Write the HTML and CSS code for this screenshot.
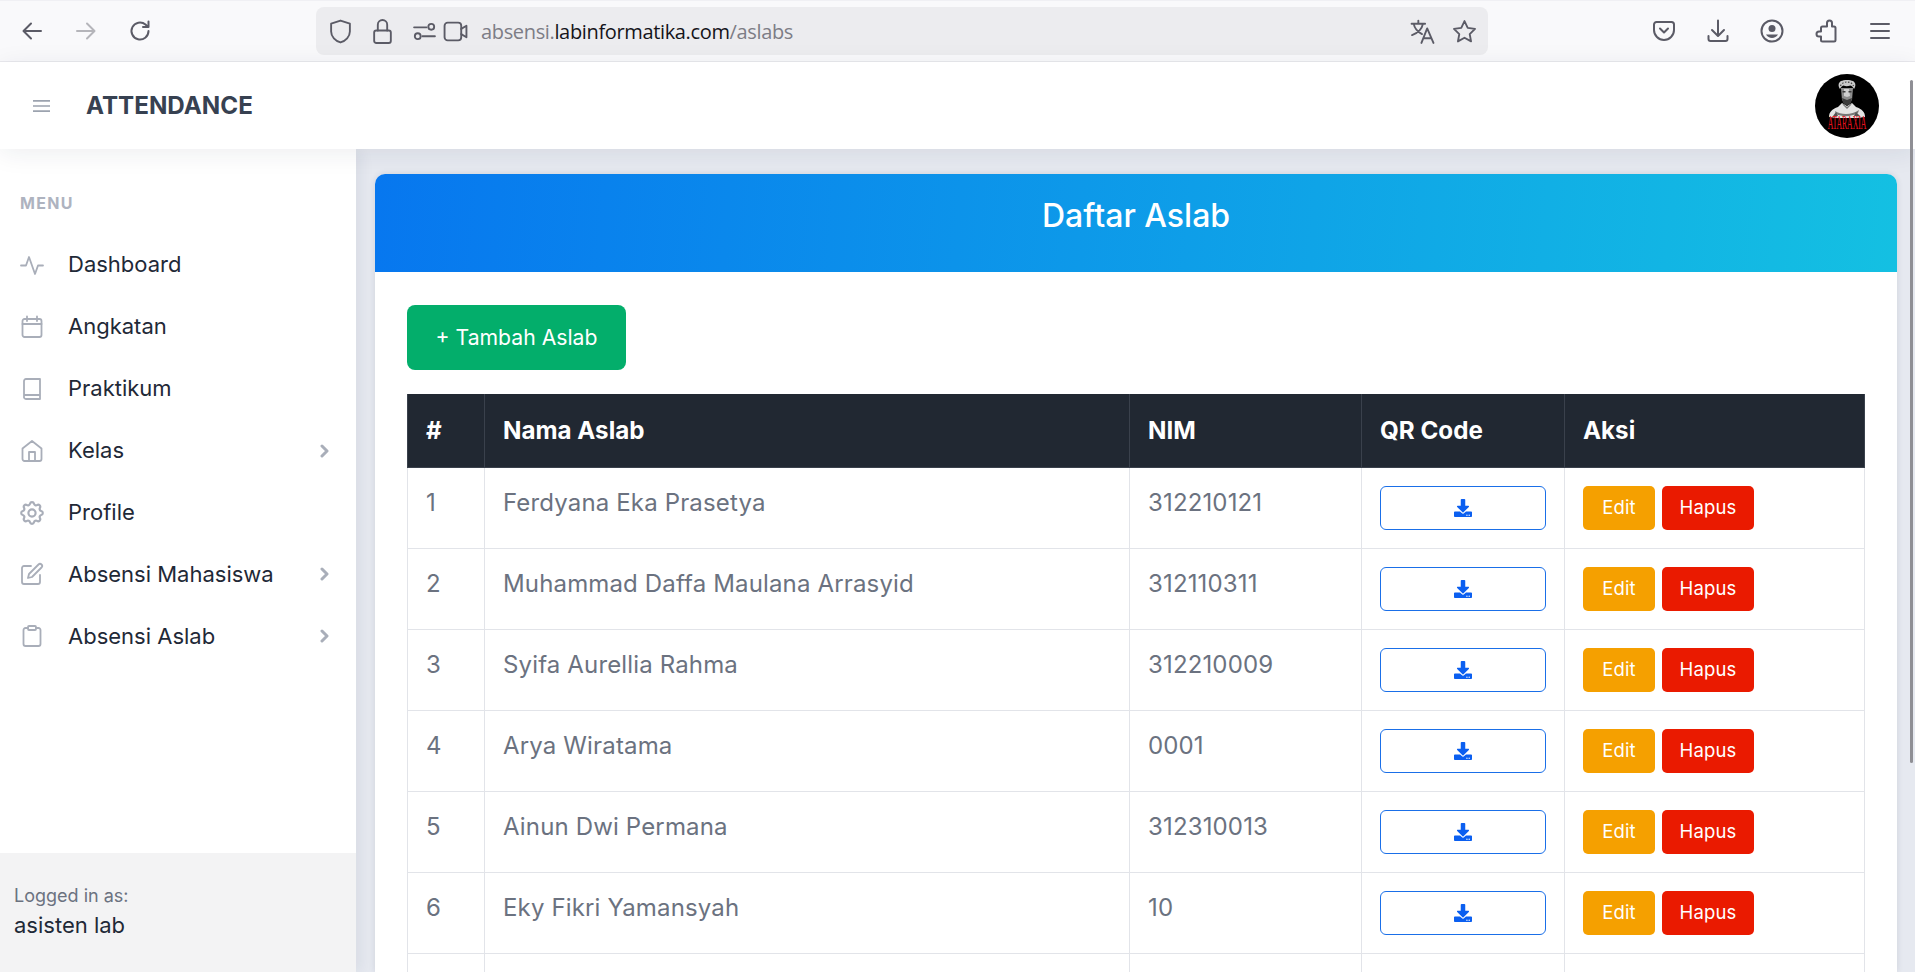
FILE: index.html
```html
<!DOCTYPE html>
<html lang="id">
<head>
<meta charset="utf-8">
<title>Daftar Aslab</title>
<link rel="stylesheet" href="styles.css">
</head>
<body>
<div class="window">
  <div class="toolbar">
    <div class="nav">
      <svg class="tb" viewBox="0 0 24 24"><path d="M21 12H4M11 4.500 3.500 12l7.500 7.500"/></svg>
      <svg class="tb dim" viewBox="0 0 24 24"><path d="M3 12h17M13 4.500l7.500 7.500-7.500 7.500"/></svg>
      <svg class="tb" viewBox="0 0 24 24"><path d="M20.500 12a8.500 8.500 0 1 1-3-6.500L20 8M20.500 2.500V8H15"/></svg>
    </div>
    <div class="urlbar">
      <svg class="ub" viewBox="0 0 24 24"><path d="M12 1.500 3 4.500V12c0 5 4 9 9 10.500 5-1.500 9-5.500 9-10.500V4.500z"/></svg>
      <svg class="ub ub-lock" viewBox="0 0 24 24"><rect x="4" y="11" width="16" height="12" rx="2"/><path d="M7.500 11V5.500a4.500 4.500 0 0 1 9 0V11"/></svg>
      <svg class="ub ub-perm" viewBox="0 0 24 24"><path d="M2 8h12M10 16.500h12"/><circle cx="18.500" cy="7.500" r="2.800"/><circle cx="5.500" cy="16.500" r="2.800"/></svg>
      <svg class="ub ub-cam" viewBox="0 0 24 24"><rect x="1.500" y="3.500" width="16" height="17" rx="3"/><path d="m17.500 9.500 5-3v11l-5-3"/></svg>
      <span class="url"><span class="url-muted">absensi.</span>labinformatika.com<span class="url-muted">/aslabs</span></span>
      <svg class="ub ub-push" viewBox="0 0 24 24"><path d="M1.500 4.500h13M8 1.500v3M3.500 4.500c1 5 4 8 8 10M12.500 4.500c-1 5-5 9-10.500 11M11 23l5.500-14L22.500 23M12.800 18.500h7.500"/></svg>
      <svg class="ub ub-star" viewBox="0 0 24 24"><path d="m12 2 3.100 6.500 7 1-5.100 5 1.300 7L12 18l-6.300 3.500 1.300-7-5.100-5 7-1z"/></svg>
    </div>
    <div class="tools">
      <svg class="tb" viewBox="0 0 24 24"><path d="M4.500 3h15A2.500 2.500 0 0 1 22 5.500V11a10 10 0 0 1-20 0V5.500A2.500 2.500 0 0 1 4.500 3zM8 9.500l4 4 4-4"/></svg>
      <svg class="tb" viewBox="0 0 24 24"><path d="M12 1.500v15M6 11l6 6 6-6M2.500 17v3a2 2 0 0 0 2 2h15a2 2 0 0 0 2-2v-3"/></svg>
      <svg class="tb" viewBox="0 0 24 24"><circle cx="12" cy="12" r="10.500"/><circle class="solid" cx="12" cy="9.500" r="3.500"/><path class="solid" d="M6 15.500h12a7 7 0 0 1-12 0z"/></svg>
      <svg class="tb" viewBox="0 0 24 24"><path d="M13 5.500V4a2.500 2.500 0 0 1 5 0v3.500h2a1.500 1.500 0 0 1 1.500 1.500v12a1.500 1.500 0 0 1-1.500 1.500H8.500A1.500 1.500 0 0 1 7 21v-3.500H5a2.500 2.500 0 0 1 0-5h2V9a1.500 1.500 0 0 1 1.500-1.500H13z"/></svg>
      <svg class="tb" viewBox="0 0 24 24"><path d="M3 5h18M3 12h18M3 19h18"/></svg>
    </div>
  </div>

  <div class="app">
    <header class="topbar">
      <div class="brand">
        <svg class="burger" viewBox="0 0 18 14"><path d="M0 1.500h18M0 7h18M0 12.500h18"/></svg>
        <span class="title">ATTENDANCE</span>
      </div>
      <svg class="avatar" viewBox="0 0 64 64">
        <circle cx="32" cy="32" r="32" fill="#000"/>
        <path fill="#e4e4e4" d="M14 43c0-5 3-8 9-10l4-4 5 3 5-3 4 4c6 2 9 5 9 10l-8 1H22z"/>
        <path fill="#777" d="M20 37c6 4 17 4 24-1l-1 3c-7 4-16 4-22 1zM27 29l5 4 5-4-1 2-4 4-4-4z"/>
        <path fill="#555" d="M18 42l3-4 2 4zM41 38l4 4h-6z"/>
        <path fill="#8e8e8e" d="M26 14h12l-1 12-5 5-5-5z"/>
        <path fill="#d0d0d0" d="M29 15h5l1 7-3 1-3-1z"/>
        <path fill="#3c3c3c" d="M27 24l5 2 5-2-1 5-4 3-4-3zM27.500 17h3v1.500h-3zM33.500 17h3v1.500h-3z"/>
        <path fill="#c9c9c9" d="M25 15c-2-3-2-6 1-8 3-1.500 9-1.500 12 0 3 2 3 5 1 8-1-2-2-3-3.500-3.500-3 1-5 1-7 0-1.500.5-2.500 1.500-3.500 3.500z"/>
        <path class="avatar-curls" d="M25.500 12c1-3 4-4 6.500-4s5.500 1 6.500 4"/>
        <text class="avatar-text" transform="translate(32 55) scale(.96 2.250)">ATARAXIA</text>
      </svg>
    </header>

    <div class="body">
      <aside class="sidebar">
        <nav class="menu">
          <div class="menu-label">MENU</div>
          <a class="item"><svg class="ic" viewBox="0 0 24 24"><path d="M1 12.500h5l3-8.500 6 17 3-8.500h5"/></svg><span class="item-text">Dashboard</span></a>
          <a class="item"><svg class="ic" viewBox="0 0 24 24"><rect x="2.500" y="4" width="19" height="18" rx="2"/><path d="M7 1.500V6M17 1.500V6M2.500 9h19"/></svg><span class="item-text">Angkatan</span></a>
          <a class="item"><svg class="ic" viewBox="0 0 24 24"><path d="M4 19.500V4a2 2 0 0 1 2-2h14v20H6a2 2 0 0 1-2-2.500zM4 18h16"/></svg><span class="item-text">Praktikum</span></a>
          <a class="item"><svg class="ic" viewBox="0 0 24 24"><path d="M2.500 9.500 12 2l9.500 7.500V20a2 2 0 0 1-2 2h-15a2 2 0 0 1-2-2zM9 22V13h6v9"/></svg><span class="item-text">Kelas</span><svg class="chev" viewBox="0 0 10 14"><path d="m2 2 5 5-5 5"/></svg></a>
          <a class="item"><svg class="ic" viewBox="2 2 20 20"><circle cx="12" cy="12" r="3"/><path d="M10.325 4.317c.426-1.756 2.924-1.756 3.350 0a1.724 1.724 0 002.573 1.066c1.543-.94 3.310.826 2.370 2.370a1.724 1.724 0 001.065 2.572c1.756.426 1.756 2.924 0 3.350a1.724 1.724 0 00-1.066 2.573c.94 1.543-.826 3.310-2.370 2.370a1.724 1.724 0 00-2.572 1.065c-.426 1.756-2.924 1.756-3.350 0a1.724 1.724 0 00-2.573-1.066c-1.543.94-3.310-.826-2.370-2.370a1.724 1.724 0 00-1.065-2.572c-1.756-.426-1.756-2.924 0-3.350a1.724 1.724 0 001.066-2.573c-.94-1.543.826-3.310 2.370-2.370.996.608 2.296.07 2.572-1.065z"/></svg><span class="item-text">Profile</span></a>
          <a class="item"><svg class="ic" viewBox="0 0 24 24"><path d="M11 4H4a2 2 0 0 0-2 2v14a2 2 0 0 0 2 2h14a2 2 0 0 0 2-2v-7"/><path d="M18.500 2.500a2.100 2.100 0 0 1 3 3L12 15l-4 1 1-4z"/></svg><span class="item-text">Absensi Mahasiswa</span><svg class="chev" viewBox="0 0 10 14"><path d="m2 2 5 5-5 5"/></svg></a>
          <a class="item"><svg class="ic" viewBox="0 0 24 24"><path d="M8 4H5.500a2 2 0 0 0-2 2v14a2 2 0 0 0 2 2h13a2 2 0 0 0 2-2V6a2 2 0 0 0-2-2H16"/><rect x="8" y="2" width="8" height="4" rx="1"/></svg><span class="item-text">Absensi Aslab</span><svg class="chev" viewBox="0 0 10 14"><path d="m2 2 5 5-5 5"/></svg></a>
        </nav>
        <div class="login">
          <div class="login-label">Logged in as:</div>
          <div class="login-name">asisten lab</div>
        </div>
      </aside>

      <main class="main">
        <section class="card">
          <div class="card-head">Daftar Aslab</div>
          <div class="card-body">
            <a class="add-btn">+ Tambah Aslab</a>
            <table class="tbl">
              <colgroup>
                <col class="c-no"><col class="c-name"><col class="c-nim"><col class="c-qr"><col class="c-act">
              </colgroup>
              <thead>
                <tr><th>#</th><th>Nama Aslab</th><th>NIM</th><th>QR Code</th><th>Aksi</th></tr>
              </thead>
              <tbody>
                <tr><td>1</td><td>Ferdyana Eka Prasetya</td><td>312210121</td><td><a class="qr"><svg class="dl" viewBox="0 0 512 512"><path d="M216 0h80c13 0 24 11 24 24v168h88c18 0 27 21 14 34L270 378c-8 8-20 8-28 0L90 226c-13-13-4-34 14-34h88V24c0-13 11-24 24-24zm296 376v112c0 13-11 24-24 24H24c-13 0-24-11-24-24V376c0-13 11-24 24-24h147l49 49c20 20 52 20 72 0l49-49h147c13 0 24 11 24 24zM388 464c0-11-9-20-20-20s-20 9-20 20 9 20 20 20 20-9 20-20zm64 0c0-11-9-20-20-20s-20 9-20 20 9 20 20 20 20-9 20-20z"/></svg></a></td><td><div class="acts"><a class="btn edit">Edit</a><a class="btn del">Hapus</a></div></td></tr>
                <tr><td>2</td><td>Muhammad Daffa Maulana Arrasyid</td><td>312110311</td><td><a class="qr"><svg class="dl" viewBox="0 0 512 512"><path d="M216 0h80c13 0 24 11 24 24v168h88c18 0 27 21 14 34L270 378c-8 8-20 8-28 0L90 226c-13-13-4-34 14-34h88V24c0-13 11-24 24-24zm296 376v112c0 13-11 24-24 24H24c-13 0-24-11-24-24V376c0-13 11-24 24-24h147l49 49c20 20 52 20 72 0l49-49h147c13 0 24 11 24 24zM388 464c0-11-9-20-20-20s-20 9-20 20 9 20 20 20 20-9 20-20zm64 0c0-11-9-20-20-20s-20 9-20 20 9 20 20 20 20-9 20-20z"/></svg></a></td><td><div class="acts"><a class="btn edit">Edit</a><a class="btn del">Hapus</a></div></td></tr>
                <tr><td>3</td><td>Syifa Aurellia Rahma</td><td>312210009</td><td><a class="qr"><svg class="dl" viewBox="0 0 512 512"><path d="M216 0h80c13 0 24 11 24 24v168h88c18 0 27 21 14 34L270 378c-8 8-20 8-28 0L90 226c-13-13-4-34 14-34h88V24c0-13 11-24 24-24zm296 376v112c0 13-11 24-24 24H24c-13 0-24-11-24-24V376c0-13 11-24 24-24h147l49 49c20 20 52 20 72 0l49-49h147c13 0 24 11 24 24zM388 464c0-11-9-20-20-20s-20 9-20 20 9 20 20 20 20-9 20-20zm64 0c0-11-9-20-20-20s-20 9-20 20 9 20 20 20 20-9 20-20z"/></svg></a></td><td><div class="acts"><a class="btn edit">Edit</a><a class="btn del">Hapus</a></div></td></tr>
                <tr><td>4</td><td>Arya Wiratama</td><td>0001</td><td><a class="qr"><svg class="dl" viewBox="0 0 512 512"><path d="M216 0h80c13 0 24 11 24 24v168h88c18 0 27 21 14 34L270 378c-8 8-20 8-28 0L90 226c-13-13-4-34 14-34h88V24c0-13 11-24 24-24zm296 376v112c0 13-11 24-24 24H24c-13 0-24-11-24-24V376c0-13 11-24 24-24h147l49 49c20 20 52 20 72 0l49-49h147c13 0 24 11 24 24zM388 464c0-11-9-20-20-20s-20 9-20 20 9 20 20 20 20-9 20-20zm64 0c0-11-9-20-20-20s-20 9-20 20 9 20 20 20 20-9 20-20z"/></svg></a></td><td><div class="acts"><a class="btn edit">Edit</a><a class="btn del">Hapus</a></div></td></tr>
                <tr><td>5</td><td>Ainun Dwi Permana</td><td>312310013</td><td><a class="qr"><svg class="dl" viewBox="0 0 512 512"><path d="M216 0h80c13 0 24 11 24 24v168h88c18 0 27 21 14 34L270 378c-8 8-20 8-28 0L90 226c-13-13-4-34 14-34h88V24c0-13 11-24 24-24zm296 376v112c0 13-11 24-24 24H24c-13 0-24-11-24-24V376c0-13 11-24 24-24h147l49 49c20 20 52 20 72 0l49-49h147c13 0 24 11 24 24zM388 464c0-11-9-20-20-20s-20 9-20 20 9 20 20 20 20-9 20-20zm64 0c0-11-9-20-20-20s-20 9-20 20 9 20 20 20 20-9 20-20z"/></svg></a></td><td><div class="acts"><a class="btn edit">Edit</a><a class="btn del">Hapus</a></div></td></tr>
                <tr><td>6</td><td>Eky Fikri Yamansyah</td><td>10</td><td><a class="qr"><svg class="dl" viewBox="0 0 512 512"><path d="M216 0h80c13 0 24 11 24 24v168h88c18 0 27 21 14 34L270 378c-8 8-20 8-28 0L90 226c-13-13-4-34 14-34h88V24c0-13 11-24 24-24zm296 376v112c0 13-11 24-24 24H24c-13 0-24-11-24-24V376c0-13 11-24 24-24h147l49 49c20 20 52 20 72 0l49-49h147c13 0 24 11 24 24zM388 464c0-11-9-20-20-20s-20 9-20 20 9 20 20 20 20-9 20-20zm64 0c0-11-9-20-20-20s-20 9-20 20 9 20 20 20 20-9 20-20z"/></svg></a></td><td><div class="acts"><a class="btn edit">Edit</a><a class="btn del">Hapus</a></div></td></tr>
                <tr class="empty"><td></td><td></td><td></td><td></td><td></td></tr>
              </tbody>
            </table>
          </div>
        </section>
      </main>
    </div>
  </div>
  <div class="scroll-thumb"></div>
</div>
</body>
</html>
```
FILE: styles.css
```css
* { box-sizing: border-box; }
html, body { margin: 0; height: 100%; overflow: hidden; }
body { font-family: Inter, "Open Sans", sans-serif; color: #1f2937; background: #fff; }

.window { position: relative; width: 1915px; height: 972px; overflow: hidden; display: flex; flex-direction: column; }

/* Browser toolbar */
.toolbar { flex: 0 0 62px; height: 62px; display: flex; align-items: center; background: #f9f9fb; border-top: 1px solid #f0f0f4; border-bottom: 1px solid #e9e9ed; padding: 0 23px 0 20px; }
.nav { display: flex; align-items: center; gap: 30px; width: 296px; }
.tb { width: 24px; height: 24px; flex: none; fill: none; stroke: #5b5b66; stroke-width: 2; stroke-linecap: round; stroke-linejoin: round; }
.tb.dim { stroke: #b5b5ba; }
.tb .solid { fill: #5b5b66; stroke: none; }
.urlbar { width: 1172px; height: 48px; border-radius: 8px; background: #ececef; display: flex; align-items: center; padding: 0 11px 0 12px; }
.ub { width: 25px; height: 25px; flex: none; fill: none; stroke: #5b5b66; stroke-width: 1.800; stroke-linecap: round; stroke-linejoin: round; }
.ub-lock { margin-left: 17px; }
.ub-perm { margin-left: 17px; }
.ub-cam { margin-left: 6px; }
.ub-push { margin-left: auto; }
.ub-star { margin-left: 17px; }
.url { font-family: "Open Sans", sans-serif; font-size: 20px; letter-spacing: -0.35px; color: #15141a; margin-left: 13px; white-space: nowrap; }
.url-muted { color: #7d7d86; }
.tools { display: flex; align-items: center; gap: 30px; margin-left: auto; }

/* App header */
.app { flex: 1; min-height: 0; display: flex; flex-direction: column; }
.topbar { position: relative; z-index: 2; flex: 0 0 87px; display: flex; align-items: center; justify-content: space-between; background: #fff; padding: 0 36px 0 33px; box-shadow: 0 4px 24px rgba(30, 40, 70, .08); }
.brand { display: flex; align-items: center; gap: 36px; }
.burger { width: 17px; height: 14px; fill: none; stroke: #9ca3af; stroke-width: 1.800; }
.title { font-size: 24.200px; font-weight: 700; color: #374151; }
.avatar { width: 64px; height: 64px; display: block; }
.avatar-curls { fill: none; stroke: #444; stroke-width: 1.200; stroke-dasharray: 1.500 1.500; }
.avatar-text { font-family: "Liberation Serif", serif; font-size: 8px; fill: #e8101c; text-anchor: middle; }

/* Body */
.body { flex: 1; min-height: 0; display: flex; background: #e6e9f0; }
.sidebar { flex: 0 0 356px; display: flex; flex-direction: column; justify-content: space-between; background: #fff; box-shadow: 4px 0 14px rgba(30, 40, 70, .07); }
.menu { padding: 43px 20px 0; }
.menu-label { font-size: 16px; font-weight: 700; letter-spacing: 1.300px; color: #aeb3bf; line-height: 22px; margin-bottom: 20px; }
.item { display: flex; align-items: center; height: 61.900px; color: #1f2937; }
.ic { width: 24px; height: 24px; flex: none; fill: none; stroke: #a9aeb9; stroke-width: 1.800; stroke-linecap: round; stroke-linejoin: round; }
.item-text { margin-left: 24px; font-size: 22px; line-height: 30px; position: relative; top: -0.5px; }
.chev { width: 10px; height: 14px; margin-left: auto; margin-right: 6px; fill: none; stroke: #a9aeb9; stroke-width: 3; stroke-linecap: round; stroke-linejoin: round; }
.login { height: 119px; background: #f3f3f4; padding: 31px 14px 0; }
.login-label { font-size: 18px; line-height: 24px; color: #6b7280; }
.login-name { font-size: 22px; line-height: 30px; margin-top: 2px; color: #1f2937; }

/* Card */
.main { flex: 1; min-width: 0; padding: 25px 18px 0 19px; }
.card { background: #fff; border-radius: 10px 10px 0 0; overflow: hidden; height: 100%; box-shadow: 0 0 6px rgba(30, 40, 70, .12); }
.card-head { height: 98px; display: flex; align-items: center; justify-content: center; color: #fff; font-size: 32px; font-weight: 500; background: linear-gradient(95deg, #0777ef, #14c0e2); padding-bottom: 16px; }
.card-body { padding: 33px 32px 0; }
.add-btn { display: inline-flex; align-items: center; justify-content: center; width: 219px; height: 65px; border-radius: 8px; background: #03ae6b; color: #fff; font-size: 21.200px; padding-bottom: 2px; }

/* Table */
.tbl { width: 1457px; margin-top: 24px; border-collapse: collapse; table-layout: fixed; }
.c-no { width: 77px; } .c-name { width: 645px; } .c-nim { width: 232px; } .c-qr { width: 203px; } .c-act { width: 300px; }
.tbl th { height: 73px; background: #212832; border: 1px solid #3a414c; border-top: 0; color: #fff; font-size: 24.200px; font-weight: 700; text-align: left; padding: 0 18px; }
.tbl td { height: 81px; border: 1px solid #e2e4e9; vertical-align: top; padding: 18px; font-size: 24px; letter-spacing: .15px; line-height: 34px; color: #6b7280; }
.tbl tr.empty td { height: 40px; }
.qr { display: flex; align-items: center; justify-content: center; width: 166px; height: 44px; border: 1.500px solid #1a6fe8; border-radius: 6px; background: #fff; }
.dl { width: 18px; height: 18px; fill: #0b5ff0; }
.acts { display: flex; gap: 7px; }
.btn { display: flex; align-items: center; justify-content: center; height: 44px; border-radius: 5px; color: #fff; font-size: 18.500px; padding-bottom: 1px; }
.edit { width: 72px; background: #f5a000; }
.del { width: 92px; background: #ea1a00; }

/* Page scrollbar overlay */
.scroll-thumb { position: absolute; right: 2px; top: 80px; width: 3px; height: 683px; border-radius: 2px; background: #8f8f95; z-index: 5; }
```
